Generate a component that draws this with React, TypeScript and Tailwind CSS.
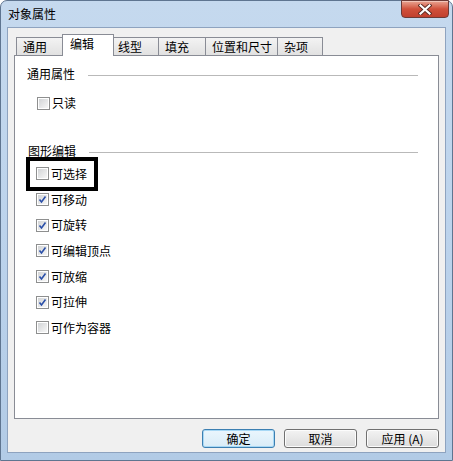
import React from "react";

const font = { fontFamily: '"Noto Sans CJK SC", "Liberation Sans", sans-serif' };

const tabs = [
  { label: "通用", w: "w-[48px]" },
  { label: "编辑", w: "w-[52px]", active: true },
  { label: "线型", w: "w-[48px]" },
  { label: "填充", w: "w-[48px]" },
  { label: "位置和尺寸", w: "w-[73px]" },
  { label: "杂项", w: "w-[46px]" },
];

const items = [
  { label: "可选择", checked: false },
  { label: "可移动", checked: true },
  { label: "可旋转", checked: true },
  { label: "可编辑顶点", checked: true },
  { label: "可放缩", checked: true },
  { label: "可拉伸", checked: true },
  { label: "可作为容器", checked: false },
];

function CheckBox({ checked }: { checked: boolean }) {
  return (
    <span className="w-[13px] h-[13px] border border-[#8e8f8f] bg-white p-px shrink-0 flex">
      <span className="flex-1 bg-gradient-to-br from-[#d2d4d6] to-[#f7f7f7] flex items-center justify-center">
        {checked && (
          <svg width="9" height="9" viewBox="0 0 9 9">
            <path d="M1.5 4.5 L3.5 7 L7.5 1.5" fill="none" stroke="#2a4fa8" strokeWidth="1.6" />
          </svg>
        )}
      </span>
    </span>
  );
}

function GroupHeader({ title, className }: { title: string; className: string }) {
  return (
    <div className={`flex items-center h-[16px] pr-[20px] ${className}`}>
      <span className="text-[12px] leading-[16px]">{title}</span>
      <span className="flex-1 ml-[13px] mt-[2px] h-px bg-[#b9b9b9]" />
    </div>
  );
}

function Button({ label, primary }: { label: string; primary?: boolean }) {
  return (
    <button
      className={`w-[73px] h-[19px] rounded-[3px] border text-[12px] leading-none text-black flex items-center justify-center ${
        primary
          ? "border-[#3c7fb1] bg-gradient-to-b from-[#eaf6fd] to-[#d9ecf7] shadow-[inset_0_0_0_1px_#a7d8f5]"
          : "border-[#707070] bg-gradient-to-b from-[#f3f3f3] to-[#dcdcdc] shadow-[inset_0_0_0_1px_#fcfcfc]"
      }`}
    >
      {label}
    </button>
  );
}

export default function App() {
  return (
    <div className="w-[453px] h-[461px] bg-white overflow-hidden text-black" style={font}>
      <div className="h-full rounded-t-[7px] border border-[#5f7590] bg-gradient-to-b from-[#c5d9ee] via-[#bcd3ec] to-[#b2cbe6] flex flex-col px-[6px] pb-[7px]">
        <div className="h-[26px] flex justify-between">
          <span className="pl-[1px] pt-[5px] text-[12px] leading-[16px]">对象属性</span>
          <div className="w-[48px] h-[18px] mr-[-3px] mt-[-1px] rounded-b-[4px] border border-[#6d3a36] bg-gradient-to-b from-[#e8a493] via-[#d0503b] to-[#c1402e] flex items-center justify-center shadow-[inset_0_1px_0_#f1c4b8]">
            <svg width="14" height="11" viewBox="0 0 14 11">
              <path d="M2.5 1.5 L11.5 9.5 M11.5 1.5 L2.5 9.5" stroke="#5b2a22" strokeWidth="4" strokeLinecap="square" />
              <path d="M2.5 1.5 L11.5 9.5 M11.5 1.5 L2.5 9.5" stroke="#ffffff" strokeWidth="2.2" strokeLinecap="square" />
            </svg>
          </div>
        </div>

        <div className="flex-1 bg-[#f0f0f0] border border-[#8ea3bf] flex flex-col">
          <div className="flex items-end h-[27px] pt-[5px] pl-[8px]">
            {tabs.map((t) =>
              t.active ? (
                <div
                  key={t.label}
                  className={`${t.w} -mx-[2px] h-[22px] relative z-10 mb-[-1px] bg-white border border-b-0 border-[#898c95] text-[12px] leading-[16px] pl-[7px] pt-[1px]`}
                >
                  {t.label}
                </div>
              ) : (
                <div
                  key={t.label}
                  className={`${t.w} h-[18px] -ml-px first:ml-0 border border-b-0 border-[#898c95] bg-gradient-to-b from-[#f3f3f3] to-[#e1e1e1] text-[12px] leading-[16px] pl-[6px] pt-px`}
                >
                  {t.label}
                </div>
              )
            )}
          </div>

          <div className="ml-[6px] w-[425px] h-[364px] bg-white border border-[#898c95] relative">
            <GroupHeader title="通用属性" className="mt-[10px] pl-[12px]" />
            <div className="mt-[13px] pl-[22px] flex items-center gap-[2px] h-[16px]">
              <CheckBox checked={false} />
              <span className="text-[12px] leading-[16px]">只读</span>
            </div>

            <GroupHeader title="图形编辑" className="mt-[32px] pl-[13px]" />
            <div className="mt-[2px] flex flex-col">
              {items.map((it) => (
                <div key={it.label} className="h-[25.7px] pl-[21px] flex items-center gap-[2px]">
                  <CheckBox checked={it.checked} />
                  <span className="text-[12px] leading-[16px]">{it.label}</span>
                </div>
              ))}
            </div>

            <div className="absolute left-[11px] top-[101px] w-[72px] h-[34px] border-[4px] border-black" />
          </div>

          <div className="mt-[10px] ml-[194px] flex gap-[9px]">
            <Button label="确定" primary />
            <Button label="取消" />
            <Button label="应用 (A)" />
          </div>
        </div>
      </div>
    </div>
  );
}
